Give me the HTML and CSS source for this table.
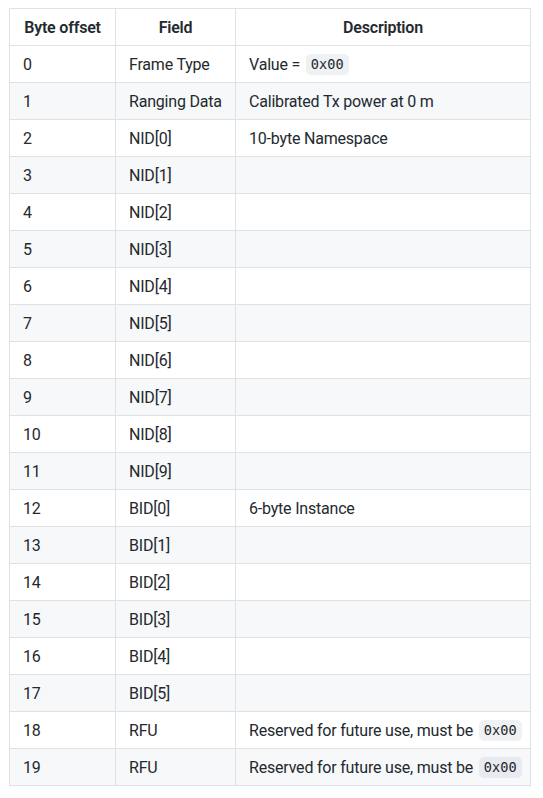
FILE: index.html
```html
<!DOCTYPE html>
<html>
<head>
<meta charset="utf-8">
<link rel="stylesheet" href="styles.css">
</head>
<body>
<table class="spec">
<thead>
<tr><th class="c1">Byte offset</th><th class="c2">Field</th><th class="c3">Description</th></tr>
</thead>
<tbody>
<tr><td>0</td><td>Frame Type</td><td>Value = <code>0x00</code></td></tr>
<tr><td>1</td><td>Ranging Data</td><td>Calibrated Tx power at 0 m</td></tr>
<tr><td>2</td><td>NID[0]</td><td>10-byte Namespace</td></tr>
<tr><td>3</td><td>NID[1]</td><td></td></tr>
<tr><td>4</td><td>NID[2]</td><td></td></tr>
<tr><td>5</td><td>NID[3]</td><td></td></tr>
<tr><td>6</td><td>NID[4]</td><td></td></tr>
<tr><td>7</td><td>NID[5]</td><td></td></tr>
<tr><td>8</td><td>NID[6]</td><td></td></tr>
<tr><td>9</td><td>NID[7]</td><td></td></tr>
<tr><td>10</td><td>NID[8]</td><td></td></tr>
<tr><td>11</td><td>NID[9]</td><td></td></tr>
<tr><td>12</td><td>BID[0]</td><td>6-byte Instance</td></tr>
<tr><td>13</td><td>BID[1]</td><td></td></tr>
<tr><td>14</td><td>BID[2]</td><td></td></tr>
<tr><td>15</td><td>BID[3]</td><td></td></tr>
<tr><td>16</td><td>BID[4]</td><td></td></tr>
<tr><td>17</td><td>BID[5]</td><td></td></tr>
<tr><td>18</td><td>RFU</td><td>Reserved for future use, must be <code>0x00</code></td></tr>
<tr><td>19</td><td>RFU</td><td>Reserved for future use, must be <code>0x00</code></td></tr>
</tbody>
</table>
</body>
</html>
```
FILE: styles.css
```css
html, body {
  margin: 0;
  padding: 0;
  background: #ffffff;
}
body {
  font-family: Roboto, "Liberation Sans", sans-serif;
  font-size: 16px;
  line-height: 24px;
  color: #24292e;
  padding: 8px 0 0 9px;
}
.spec {
  border-collapse: separate;
  border-spacing: 0;
  table-layout: fixed;
  width: 522px;
  border-top: 1px solid #dfe2e5;
  border-left: 1px solid #dfe2e5;
}
.spec th, .spec td {
  box-sizing: border-box;
  padding: 7px 13px 5px;
  border-right: 1px solid #dfe2e5;
  border-bottom: 1px solid #dfe2e5;
  height: 37px;
  white-space: nowrap;
  overflow: hidden;
  letter-spacing: -0.2px;
}
.spec th {
  font-weight: 600;
  text-align: center;
}
.spec td {
  text-align: left;
}
.spec .c1 { width: 106px; }
.spec .c2 { width: 120px; }
.spec .c3 { width: 295px; }
.spec tbody tr:nth-child(2n) {
  background: #f6f8fa;
}
.spec code {
  display: inline-block;
  font-family: "DejaVu Sans Mono", monospace;
  font-size: 13.6px;
  letter-spacing: 0;
  line-height: 21px;
  height: 21px;
  padding: 0 5px;
  margin-left: 2px;
  vertical-align: top;
  margin-top: 1px;
  border-radius: 5px;
  background: rgba(175, 184, 193, 0.2);
}
```
